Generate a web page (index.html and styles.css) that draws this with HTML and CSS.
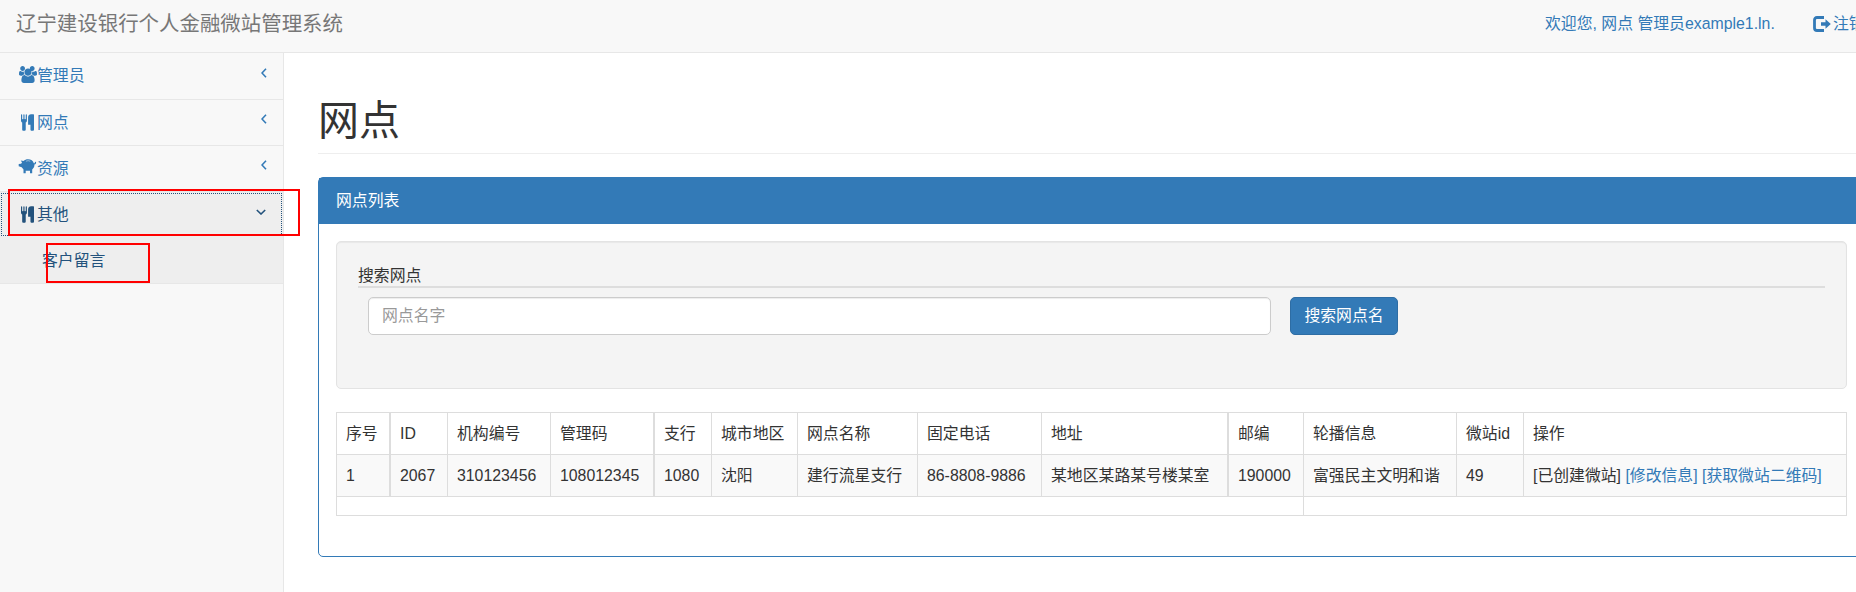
FILE: index.html
```html
<!DOCTYPE html>
<html lang="zh-CN">
<head>
<meta charset="utf-8">
<title>辽宁建设银行个人金融微站管理系统</title>
<link rel="stylesheet" href="styles.css">
</head>
<body>
<svg class="defs" width="0" height="0">
  <symbol id="users" viewBox="0 0 1920 1792"><path d="M593 896q-162 5-265 128H194q-82 0-138-40.500T0 865q0-353 124-353 6 0 43.500 21t97.500 42.500T384 597q67 0 133-23-5 37-5 66 0 139 81 256zm1071 637q0 120-73 189.500t-194 69.500H523q-121 0-194-69.500T256 1533q0-53 3.500-103.500t14-109T300 1212t43-97.500 62-81 85.500-53.500T602 960q10 0 43 21.500t73 48 107 48 135 21.500 135-21.500 107-48 73-48 43-21.500q61 0 111.500 20t85.500 53.500 62 81 43 97.500 26.500 108.500 14 109 3.500 103.500zM640 256q0 106-75 181t-181 75-181-75-75-181 75-181T384 0t181 75 75 181zm704 384q0 159-112.500 271.500T960 1024 688.500 911.500 576 640t112.500-271.500T960 256t271.500 112.500T1344 640zm576 225q0 78-56 118.500t-138 40.500h-134q-103-123-265-128 81-117 81-256 0-29-5-66 66 23 133 23 59 0 119-21.500t97.500-42.500 43.500-21q124 0 124 353zm-256-609q0 106-75 181t-181 75-181-75-75-181 75-181 181-75 181 75 75 181z"/></symbol>
  <symbol id="cutlery" viewBox="0 0 1408 1792"><path d="M640 64v640q0 61-35.500 111T512 886v779q0 52-38 90t-90 38H256q-52 0-90-38t-38-90V886q-57-21-92.500-71T0 704V64Q0 38 19 19T64 0t45 19 19 45v416q0 26 19 45t45 19 45-19 19-45V64q0-26 19-45t45-19 45 19 19 45v416q0 26 19 45t45 19 45-19 19-45V64q0-26 19-45t45-19 45 19 19 45zm768 0v1600q0 52-38 90t-90 38h-128q-52 0-90-38t-38-90v-512H800q-13 0-22.500-9.500T768 1120V320q0-132 94-226t226-94h256q26 0 45 19t19 45z"/></symbol>
  <symbol id="piggy" viewBox="0 0 18 15"><path d="M5 1.900C6.300.7 7.700.2 9.500.2c3 0 5.100 1.600 5.800 4 .8.200 1.200-.2 1.100-1.200l1-.2c.6 1.500 0 2.500-1.500 2.700.1 1.900-.6 3.600-2.200 4.900v3.800h-2.200v-2.400H7.200v2.400H5v-3.600L3.200 8.300.2 7.300V4.900l2.400-.2.900-1.200L2.300 1.400z"/><path d="M7.400 2.200q2.200-1 4.400 0" fill="none" stroke="#f8f8f8" stroke-width=".5"/></symbol>
  <symbol id="logout" viewBox="0 0 18 16"><path d="M11 1.500H4Q1.500 1.500 1.500 4v8Q1.500 14.500 4 14.500h7" fill="none" stroke="currentColor" stroke-width="2.800"/><path d="M8 6.200h4.500V3.200L17.800 8l-5.300 4.800v-3H8z"/></symbol>
</svg>
<header class="navbar">
  <a class="brand">辽宁建设银行个人金融微站管理系统</a>
  <nav class="top-links">
    <a class="welcome">欢迎您, 网点 管理员example1.ln.</a>
    <a class="logout"><svg class="icon icon-logout"><use href="#logout"/></svg>注销</a>
  </nav>
</header>
<div class="wrapper">
  <aside class="sidebar">
    <a class="item"><svg class="icon icon-users"><use href="#users"/></svg><span>管理员</span><svg class="arrow" viewBox="0 0 6 10"><path d="M5 .8L1 5l4 4.200"/></svg></a>
    <a class="item"><svg class="icon icon-cutlery"><use href="#cutlery"/></svg><span>网点</span><svg class="arrow" viewBox="0 0 6 10"><path d="M5 .8L1 5l4 4.200"/></svg></a>
    <a class="item"><svg class="icon icon-piggy"><use href="#piggy"/></svg><span>资源</span><svg class="arrow" viewBox="0 0 6 10"><path d="M5 .8L1 5l4 4.200"/></svg></a>
    <div class="open">
      <a class="item item-active"><svg class="icon icon-cutlery"><use href="#cutlery"/></svg><span>其他</span><svg class="arrow arrow-down" viewBox="0 0 10 6"><path d="M.8 1L5 5l4.200-4"/></svg></a>
      <a class="subitem">客户留言</a>
      <i class="mark mark-group"></i>
      <i class="mark mark-entry"></i>
    </div>
  </aside>
  <main class="page">
    <h1>网点</h1>
    <section class="panel">
      <div class="panel-heading">网点列表</div>
      <div class="panel-body">
        <form class="well">
          <div class="legend">搜索网点</div>
          <div class="search">
            <input class="field" type="text" placeholder="网点名字">
            <button class="btn" type="button">搜索网点名</button>
          </div>
        </form>
        <table class="grid">
          <colgroup><col class="c1"><col class="c2"><col class="c3"><col class="c4"><col class="c5"><col class="c6"><col class="c7"><col class="c8"><col class="c9"><col class="c10"><col class="c11"><col class="c12"><col class="c13"></colgroup>
          <tr><td class="thick">序号</td><td>ID</td><td>机构编号</td><td class="thick">管理码</td><td>支行</td><td>城市地区</td><td>网点名称</td><td>固定电话</td><td class="thick">地址</td><td>邮编</td><td>轮播信息</td><td>微站id</td><td>操作</td></tr>
          <tr class="odd"><td class="thick">1</td><td>2067</td><td>310123456</td><td class="thick">108012345</td><td>1080</td><td>沈阳</td><td>建行流星支行</td><td>86-8808-9886</td><td class="thick">某地区某路某号楼某室</td><td>190000</td><td>富强民主文明和谐</td><td>49</td><td>[已创建微站] <a>[修改信息]</a> <a>[获取微站二维码]</a></td></tr>
          <tr class="foot"><td colspan="10"></td><td colspan="3"></td></tr>
        </table>
      </div>
    </section>
  </main>
</div>
</body>
</html>
```
FILE: styles.css
```css
* { box-sizing: border-box; }
html { overflow: hidden; }
body {
  margin: 0;
  width: 1856px;
  height: 592px;
  overflow: hidden;
  background: #fff;
  color: #333;
  font: 15.85px/22.5px "Liberation Sans", "Noto Sans CJK SC", sans-serif;
}
a { color: #337ab7; text-decoration: none; }
.defs { position: absolute; }
.icon { fill: currentColor; flex: none; }

.navbar {
  display: flex;
  justify-content: space-between;
  align-items: center;
  height: 53px;
  padding: 0 0 3px 16px;
  background: #f8f8f8;
  border-bottom: 1px solid #e7e7e7;
  white-space: nowrap;
}
.brand { color: #777; font-size: 20.45px; }
.top-links { display: flex; width: 311px; }
.welcome { width: 268px; flex: none; }
.logout { display: flex; align-items: center; flex: none; gap: 2px; }
.icon-logout { width: 18px; height: 16px; margin-bottom: 2px; }

.wrapper { display: flex; height: 539px; }
.sidebar {
  width: 284px;
  flex: none;
  background: #f8f8f8;
  border-right: 1px solid #e7e7e7;
}
.item {
  display: flex;
  align-items: center;
  height: 46px;
  padding: 0 16px 1px 18px;
  border-bottom: 1px solid #e7e7e7;
}
.sidebar > .item:first-child { height: 47px; }
.item span { flex: 1; padding-top: 2px; }
.icon-users { width: 18px; height: 17px; margin: 0 0 2px 1px; }
.icon-cutlery { width: 13px; height: 17px; margin: 0 3px; }
.icon-piggy { width: 19px; height: 15px; margin-bottom: 3px; }
.arrow {
  width: 6px;
  height: 10px;
  margin-bottom: 6px;
  fill: none;
  stroke: currentColor;
  stroke-width: 1.6;
}
.arrow-down { width: 10px; height: 6px; }
.open {
  position: relative;
  height: 92px;
  padding-top: 1px;
  background: #eee;
  border-bottom: 1px solid #e7e7e7;
}
.open a { color: #23527c; }
.item-active {
  height: 43px;
  margin: 0 1px;
  padding: 0 16px 0 17px;
  border: 0;
  outline: 1px dotted #23527c;
  outline-offset: -1px;
}
.subitem { display: block; padding: 14px 0 0 42px; }
.mark { position: absolute; border: 2px solid #f00; }
.mark-group { left: 8px; top: -3px; width: 292px; height: 47px; }
.mark-entry { left: 46px; top: 51px; width: 104px; height: 40px; }

.page { flex: 1; padding: 45px 0 0 34px; min-width: 0; }
h1 {
  height: 56px;
  margin: 0 0 23px;
  padding-top: 1px;
  border-bottom: 1px solid #eee;
  font-size: 41px;
  line-height: 45px;
  font-weight: 400;
}
.panel {
  width: 1547px;
  height: 380px;
  border: 1px solid #337ab7;
  border-radius: 5px;
}
.panel-heading {
  height: 46px;
  padding: 12px 17px 0;
  background: #337ab7;
  color: #fff;
}
.panel-body { padding: 17px; }
.well {
  width: 1511px;
  height: 148px;
  margin: 0 0 23px;
  padding: 21px 21px 0;
  background: #f4f4f4;
  border: 1px solid #e3e3e3;
  border-radius: 5px;
  box-shadow: inset 0 1px 1px rgba(0, 0, 0, .05);
}
.legend { height: 25px; padding-top: 2px; border-bottom: 2px solid #ddd; }
.search { display: flex; gap: 19px; padding: 9px 0 0 10px; }
.field {
  width: 903px;
  height: 38px;
  padding: 6px 13px;
  border: 1px solid #ccc;
  border-radius: 5px;
  background: #fff;
  font: inherit;
  box-shadow: inset 0 1px 1px rgba(0, 0, 0, .075);
}
.field::placeholder { color: #999; opacity: 1; }
.btn {
  width: 108px;
  height: 38px;
  padding: 0;
  border: 1px solid #2e6da4;
  border-radius: 5px;
  background: #337ab7;
  color: #fff;
  font: inherit;
}

.grid {
  width: 1511px;
  table-layout: fixed;
  border-collapse: separate;
  border-spacing: 0;
  border: solid #ddd;
  border-width: 1px 0 0 1px;
}
.grid td {
  height: 42px;
  padding: 2px 0 0 9px;
  border: solid #ddd;
  border-width: 0 1px 1px 0;
  white-space: nowrap;
}
.grid .thick { border-right-width: 2px; }
.grid .odd { background: #f9f9f9; }
.grid .foot td { height: 19px; }
.c1 { width: 54px; }
.c2 { width: 57px; }
.c3 { width: 103px; }
.c4 { width: 104px; }
.c5 { width: 57px; }
.c6 { width: 86px; }
.c7 { width: 120px; }
.c8 { width: 124px; }
.c9 { width: 187px; }
.c10 { width: 75px; }
.c11 { width: 153px; }
.c12 { width: 67px; }
.c13 { width: 323px; }
```
